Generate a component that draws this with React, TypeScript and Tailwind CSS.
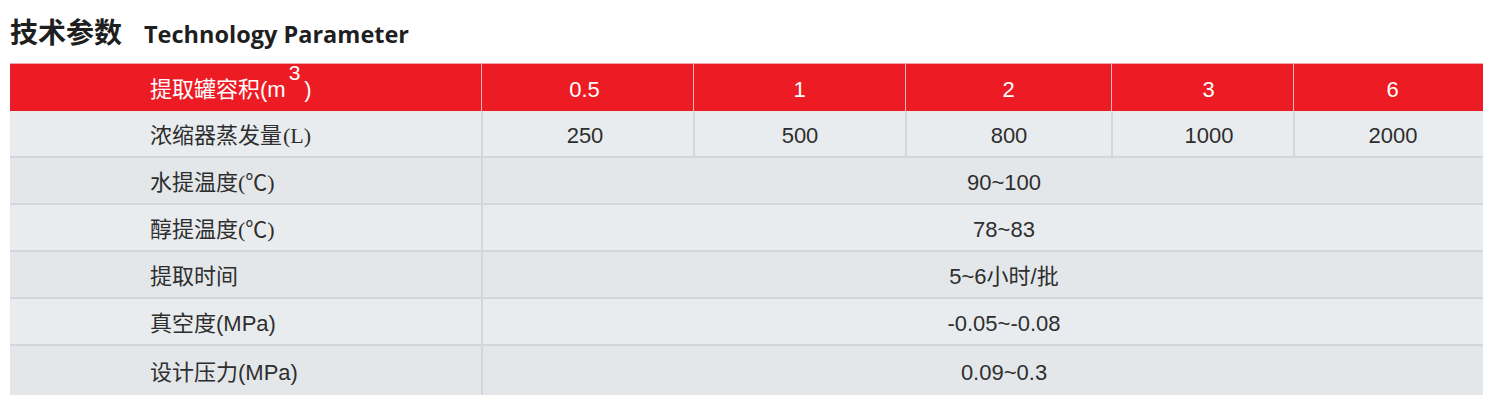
const cols = 'grid grid-cols-[471px_212px_212px_206px_182px_190px]';

// small per-column nudges so the figures sit where the original puts them
const nudge = ['pr-[6px]', '', '', 'pl-[12px]', 'pl-[8px]'];

const sizes = ['0.5', '1', '2', '3', '6'];
const evaporation = ['250', '500', '800', '1000', '2000'];

const serif = "font-['Liberation_Serif',serif]";

const spanRows: { label: React.ReactNode; value: string }[] = [
  {
    label: (
      <>
        水提温度<span className={serif}>(</span>℃<span className={serif}>)</span>
      </>
    ),
    value: '90~100',
  },
  {
    label: (
      <>
        醇提温度<span className={serif}>(</span>℃<span className={serif}>)</span>
      </>
    ),
    value: '78~83',
  },
  { label: '提取时间', value: '5~6小时/批' },
  { label: '真空度(MPa)', value: '-0.05~-0.08' },
  { label: '设计压力(MPa)', value: '0.09~0.3' },
];

export default function App() {
  return (
    <div className="w-[1495px] h-[408px] bg-white font-['Liberation_Sans','Noto_Sans_CJK_SC',sans-serif] text-[#2e2e2e]">
      <div className="flex items-baseline pl-[10px] pt-[17px] h-[63px]">
        <h2 className="text-[28px] font-bold leading-none font-['Noto_Sans_CJK_SC',sans-serif] text-[#1f1f1f]">
          技术参数
        </h2>
        <span className="ml-[22px] text-[23.5px] font-bold leading-none font-['Open_Sans',sans-serif] text-[#1f1f1f]">
          Technology Parameter
        </span>
      </div>

      <div className="ml-[10px] w-[1473px] text-[22px]">
        {/* header */}
        <div className={`${cols} h-[48px] bg-[#ed1c24] text-white border-t border-[#f6a5a8]`}>
          <div className="flex items-center pl-[140px] pt-[3px]">
            提取罐容积(m
            <span className="relative -top-[16px] text-[21px] ml-[3px] mr-[4px]">3</span>)
          </div>
          {sizes.map((s, i) => (
            <div
              key={s}
              className={`flex items-center justify-center border-l border-[#f8b3b5] pt-[3px] ${nudge[i]}`}
            >
              {s}
            </div>
          ))}
        </div>

        {/* evaporation row */}
        <div className={`${cols} h-[47px] bg-[#e9ecef] border-b-2 border-[#d3d6da]`}>
          <div className="flex items-center pl-[140px] pt-[3px]">
            浓缩器蒸发量<span className={`${serif} ml-[1px]`}>(L)</span>
          </div>
          {evaporation.map((v, i) => (
            <div
              key={v}
              className={`flex items-center justify-center border-l-2 border-[#d3d6da] pt-[4px] ${nudge[i]}`}
            >
              {v}
            </div>
          ))}
        </div>

        {spanRows.map((r, i) => (
          <div
            key={i}
            className={`grid grid-cols-[471px_1002px] ${
              i % 2 === 0 ? 'bg-[#e3e7ea]' : 'bg-[#e9ecef]'
            } ${i < spanRows.length - 1 ? 'h-[47px] border-b-2 border-[#d3d6da]' : 'h-[49px]'}`}
          >
            <div className="flex items-center pl-[140px] pt-[3px]">{r.label}</div>
            <div className="flex items-center justify-center border-l-2 border-[#d3d6da] pl-[42px] pt-[3px]">
              {r.value}
            </div>
          </div>
        ))}
      </div>
    </div>
  );
}
